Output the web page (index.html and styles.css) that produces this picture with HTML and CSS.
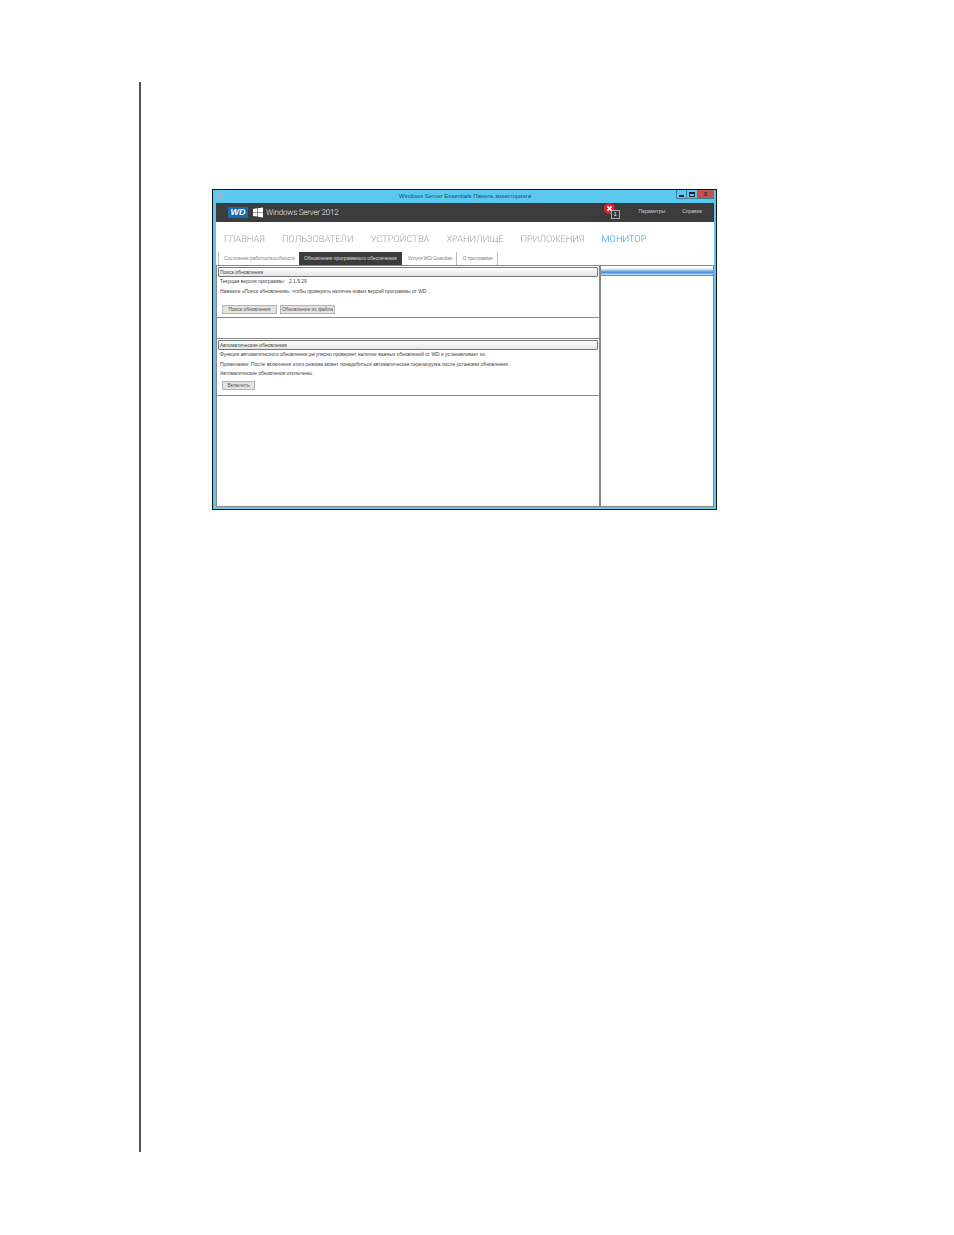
FILE: index.html
```html
<!DOCTYPE html>
<html lang="ru">
<head>
    <meta charset="UTF-8">
    <title>Windows Server Essentials Панель мониторинга</title>
    <link rel="stylesheet" href="styles.css">
</head>
<body>
    <div class="page">
        <div class="window">
            <div class="titlebar">
                <svg class="app-icon" width="7" height="7" viewBox="0 0 7 7"><rect width="7" height="7" fill="#8fb8d8"/><path d="M0 2.5h7M0 4.5h7M2.5 0v7M4.5 0v7" stroke="#5bc8f0" stroke-width="0.7"/></svg>
                <span class="title-text">Windows Server Essentials Панель мониторинга</span>
                <div class="win-buttons">
                    <div class="win-btn"><span class="glyph-min"></span></div>
                    <div class="win-btn"><span class="glyph-max"></span></div>
                    <div class="win-btn close"><span class="glyph-close">x</span></div>
                </div>
            </div>

            <div class="topbar">
                <div class="wd-logo">WD</div>
                <svg class="win-logo" width="10" height="11" viewBox="0 0 11 11"><path d="M0 1.6 4.8.9v4.2H0zM5.4.8 11 0v5.1H5.4zM0 5.8h4.8V10L0 9.3zM5.4 5.8H11V11l-5.6-.8z" fill="#fff"/></svg>
                <span class="product">Windows Server 2012</span>
                <div class="alert">
                    <svg width="11" height="11" viewBox="0 0 11 11"><circle cx="5.5" cy="5.5" r="5.5" fill="#e0202c"/><path d="M3.4 3.4l4.2 4.2M7.6 3.4 3.4 7.6" stroke="#fff" stroke-width="1.6"/></svg>
                    <span class="alert-count">1</span>
                </div>
                <a class="top-link params">Параметры</a>
                <a class="top-link">Справка</a>
            </div>

            <div class="nav">
                <span>ГЛАВНАЯ</span>
                <span>ПОЛЬЗОВАТЕЛИ</span>
                <span>УСТРОЙСТВА</span>
                <span>ХРАНИЛИЩЕ</span>
                <span>ПРИЛОЖЕНИЯ</span>
                <span class="active">МОНИТОР</span>
            </div>

            <div class="tabs">
                <div class="tab">Состояние работоспособности</div>
                <div class="tab selected">Обновление программного обеспечения</div>
                <div class="tab guardian">Услуги WD Guardian</div>
                <div class="tab">О программе</div>
            </div>

            <div class="content">
                <div class="main-pane">
                    <div class="section first">
                        <div class="section-head">Поиск обновления</div>
                        <p class="line">Текущая версия программы:&nbsp;&nbsp;&nbsp;2.1.5.29</p>
                        <p class="line">Нажмите «Поиск обновления», чтобы проверить наличие новых версий программы от WD.</p>
                        <div class="buttons">
                            <button class="btn search">Поиск обновления</button>
                            <button class="btn file">Обновление из файла</button>
                        </div>
                    </div>
                    <div class="section second">
                        <div class="section-head">Автоматические обновления</div>
                        <p class="line">Функция автоматического обновления регулярно проверяет наличие важных обновлений от WD и устанавливает их.</p>
                        <p class="line">Примечание: После включения этого режима может понадобиться автоматическая перезагрузка после установки обновления.</p>
                        <p class="line">Автоматические обновления отключены.</p>
                        <div class="buttons">
                            <button class="btn enable">Включить</button>
                        </div>
                    </div>
                </div>
                <div class="side-pane">
                    <div class="side-head"></div>
                </div>
            </div>
        </div>
    </div>
</body>
</html>
```

FILE: styles.css
```css
body {
    margin: 0;
    background: #fff;
    font-family: 'Liberation Sans', Arial, sans-serif;
}
.page {
    box-sizing: border-box;
    width: 815px;
    height: 1070px;
    margin: 82px 0 83px 139px;
    padding: 107px 0 0 71px;
    border-left: 2px solid #555;
}
.window {
    box-sizing: border-box;
    width: 505px;
    height: 321px;
    display: flex;
    flex-direction: column;
    background: #5bc8f0;
    border: 1px solid #111;
    padding: 0 2px 2px 3px;
}
.titlebar {
    height: 13px;
    display: flex;
    align-items: center;
    position: relative;
    flex: none;
}
.app-icon {
    margin-left: 1px;
}
.title-text {
    position: absolute;
    left: 0;
    right: 0;
    margin-top: -1px;
    text-align: center;
    font-size: 6px;
    color: #24505f;
}
.win-buttons {
    margin-left: auto;
    display: flex;
    align-self: flex-start;
    height: 9px;
    position: relative;
}
.win-btn {
    box-sizing: border-box;
    width: 12px;
    height: 9px;
    border: 1px solid #3d7f9f;
    border-top: 0;
    margin-right: -1px;
    display: flex;
    align-items: center;
    justify-content: center;
}
.win-btn:first-child {
    width: 11px;
}
.win-btn.close {
    width: 17px;
    background: #c75050;
    margin-right: 0;
}
.glyph-min {
    width: 5px;
    height: 2px;
    margin-top: 3px;
    background: #222;
}
.glyph-max {
    box-sizing: border-box;
    width: 6px;
    height: 5px;
    border: 1px solid #222;
    border-top-width: 2px;
}
.glyph-close {
    font-size: 7px;
    font-weight: bold;
    line-height: 8px;
    color: #333;
}
.topbar {
    height: 19px;
    flex: none;
    display: flex;
    align-items: center;
    background: #3c3c3c;
    color: #fff;
}
.wd-logo {
    margin-left: 12px;
    width: 20px;
    height: 11px;
    background: #0f6cb5;
    color: #fff;
    font-size: 9px;
    line-height: 11px;
    font-weight: bold;
    font-style: italic;
    text-align: center;
}
.win-logo {
    margin-left: 5px;
}
.product {
    margin: -1px 0 0 3px;
    font-family: Roboto, 'Liberation Sans', sans-serif;
    font-size: 8px;
    font-weight: 300;
    letter-spacing: -0.2px;
    text-rendering: geometricPrecision;
    color: #eee;
}
.alert {
    margin-left: 265px;
    margin-top: -8px;
    position: relative;
    width: 11px;
    height: 11px;
}
.alert svg {
    display: block;
}
.alert-count {
    position: absolute;
    left: 7px;
    top: 7px;
    box-sizing: border-box;
    width: 9px;
    height: 9px;
    border: 1px solid #aaa;
    background: #3c3c3c;
    font-size: 5px;
    line-height: 7px;
    text-align: center;
}
.top-link {
    margin-top: -3px;
    font-size: 5px;
    color: #ccc;
}
.params {
    margin-left: 24px;
    margin-right: 17px;
}
.nav {
    height: 30px;
    flex: none;
    box-sizing: border-box;
    background: #fff;
    display: flex;
    align-items: center;
    gap: 17px;
    padding: 5px 0 0 8px;
    font-family: Roboto, 'Liberation Sans', sans-serif;
    font-size: 9.3px;
    font-weight: 300;
    text-rendering: geometricPrecision;
    color: #a0a0a0;
}
.nav span {
    transform: translateZ(0);
}
.nav .active {
    color: #2a9ad6;
}
.tabs {
    height: 14px;
    flex: none;
    box-sizing: border-box;
    background: #fff;
    display: flex;
    padding-left: 2px;
    border-bottom: 1px solid #888;
}
.tab {
    font-size: 4.95px;
    line-height: 13px;
    padding: 0 4px 0 5px;
    color: #808080;
    border-left: 1px solid #bbb;
}
.tab:last-child {
    border-right: 1px solid #bbb;
}
.tab.selected {
    background: #3c3c3c;
    color: #ddd;
    border-left: 0;
    padding: 0 5.5px 0 5px;
}
.tab.guardian {
    border-left: 0;
    padding-left: 5.5px;
    letter-spacing: -0.1px;
}
.content {
    flex: 1;
    display: flex;
    min-height: 0;
    background: #fff;
    border-bottom: 1px solid #888;
    border-right: 1px solid #888;
}
.main-pane {
    box-sizing: border-box;
    width: 385px;
    flex: none;
    border-left: 1px solid #888;
    border-right: 2px solid #888;
}
.section {
    box-sizing: border-box;
    border-bottom: 1px solid #888;
    padding: 1px 1px 0 1px;
}
.section.first {
    height: 52px;
}
.section.second {
    height: 58px;
    margin-top: 20px;
    border-top: 1px solid #888;
}
.section-head {
    box-sizing: border-box;
    height: 10px;
    padding-left: 1px;
    font-size: 5px;
    line-height: 9px;
    color: #444;
    border: 1px solid #777;
    border-radius: 1px;
    background: linear-gradient(#fff, #e4e4e4);
}
.line {
    margin: 0;
    padding-left: 2px;
    font-size: 4.9px;
    line-height: 9.5px;
    color: #444;
    white-space: nowrap;
}
.first .buttons {
    margin-top: 9px;
}
.second .buttons {
    margin-top: 2px;
}
.buttons {
    display: flex;
    gap: 3px;
    padding-left: 4px;
}
.btn {
    box-sizing: border-box;
    height: 9px;
    padding: 0;
    font-family: inherit;
    font-size: 4.9px;
    line-height: 7px;
    color: #555;
    background: #e3e3e3;
    border: 1px solid #b4b4b4;
}
.btn.search,
.btn.file {
    width: 55px;
}
.btn.enable {
    width: 33px;
}
.side-pane {
    flex: 1;
}
.side-head {
    height: 9px;
    background: linear-gradient(#fff, #fff 25%, #3d8fe0 70%, #cfe3f6);
    border-bottom: 1px solid #888;
}
```
